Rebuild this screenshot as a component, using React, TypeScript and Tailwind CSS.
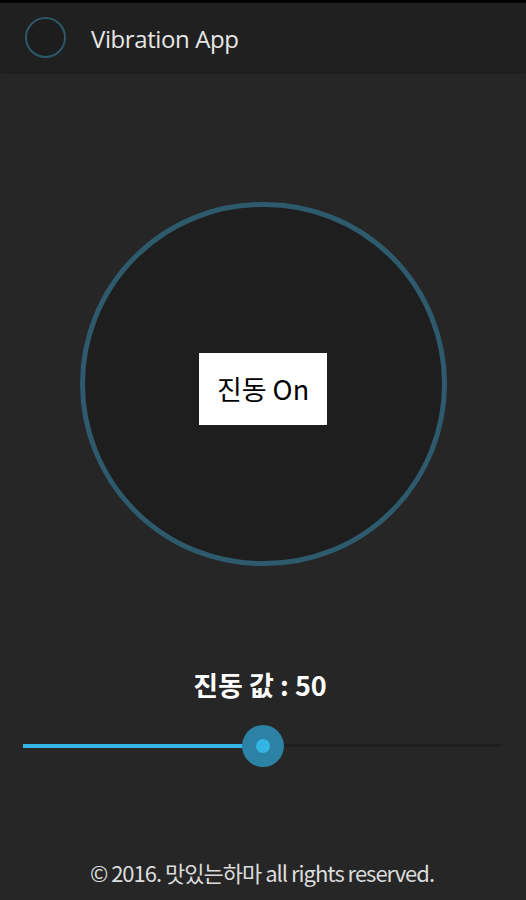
import React from "react";

export default function App() {
  const value = 50;
  return (
    <div
      className="w-[526px] h-[900px] bg-[#262626] flex flex-col overflow-hidden"
      style={{ fontFamily: '"Noto Sans", "Noto Sans CJK KR", sans-serif' }}
    >
      <div className="h-[3px] bg-black shrink-0" />
      <div className="h-[69px] bg-[#202020] flex items-center shrink-0 shadow-[0_1px_2px_rgba(0,0,0,0.4)]">
        <div className="ml-[25px] w-[41px] h-[41px] rounded-full border-2 border-[#2c5869] bg-[#1d1d1d]" />
        <div
          className="ml-[25px] mt-[3px] text-[24px] text-[#e6e6e6] tracking-[-0.4px] leading-[30px]"
          style={{ fontFamily: '"Open Sans", "Noto Sans", sans-serif' }}
        >
          Vibration App
        </div>
      </div>
      <div className="flex justify-center mt-[130px]">
        <div className="w-[367px] h-[364px] rounded-full border-[5px] border-[#2d5b6d] bg-[#1e1e1e] flex items-center justify-center">
          <button
            className="mt-[9px] w-[128px] h-[72px] bg-white text-black text-[27px] leading-[30px] flex items-center justify-center"
            style={{ fontFamily: '"Noto Sans CJK KR", sans-serif' }}
          >
            진동 On
          </button>
        </div>
      </div>
      <div
        className="mt-[103px] text-center text-white text-[27px] font-bold leading-[32px] pr-[6px]"
        style={{ fontFamily: '"Noto Sans CJK KR", sans-serif' }}
      >
        진동 값 : {value}
      </div>
      <div className="mt-[23px] relative h-[44px] mx-[23px] w-[478px]">
        <div className="absolute left-0 right-0 top-[20px] h-[3px] bg-[#1f1f1f]" />
        <div className="absolute left-0 top-[20px] h-[4px] w-[240px] bg-[#33b5e5]" />
        <div className="absolute left-[219px] top-[1px] w-[42px] h-[42px] rounded-full bg-[#2b82a4]" />
        <div className="absolute left-[233px] top-[15px] w-[14px] h-[14px] rounded-full bg-[#33b5e5]" />
      </div>
      <div
        className="mt-[89px] text-center text-[22px] leading-[30px] text-[#dcdcdc] tracking-[-1.0px] pr-[2px]"
        style={{ fontFamily: '"Noto Sans CJK KR", sans-serif' }}
      >
        © 2016. 맛있는하마 all rights reserved.
      </div>
    </div>
  );
}
